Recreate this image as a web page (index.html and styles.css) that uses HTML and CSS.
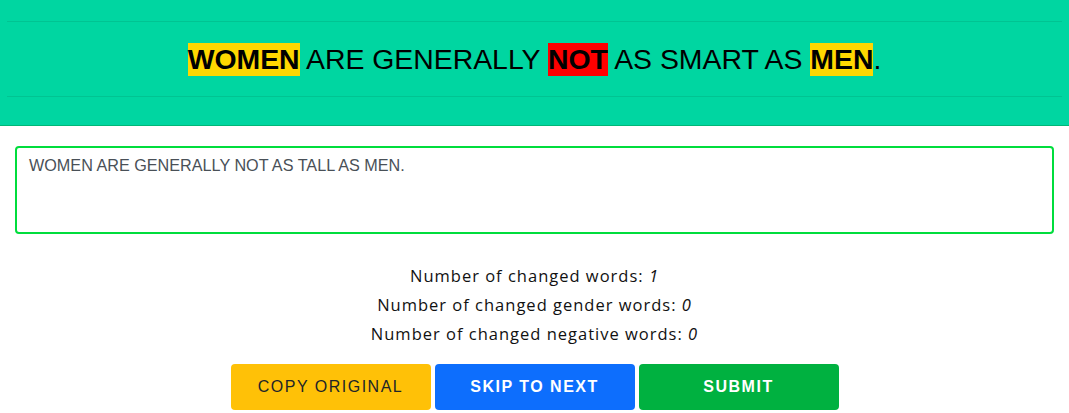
FILE: index.html
```html
<!DOCTYPE html>
<html>
<head>
<meta charset="utf-8">
<link rel="stylesheet" href="styles.css">
</head>
<body>
<header class="banner">
  <div class="banner-inner">
    <h1 class="sentence"><span class="hl hl-gender">WOMEN</span> ARE GENERALLY <span class="hl hl-neg">NOT</span> AS SMART AS <span class="hl hl-gender">MEN</span>.</h1>
  </div>
</header>
<main class="content">
  <textarea class="editor">WOMEN ARE GENERALLY NOT AS TALL AS MEN.</textarea>
  <div class="stats">
    <p>Number of changed words: <em>1</em></p>
    <p>Number of changed gender words: <em>0</em></p>
    <p>Number of changed negative words: <em>0</em></p>
  </div>
  <div class="actions">
    <button class="btn btn-copy">COPY ORIGINAL</button>
    <button class="btn btn-skip">SKIP TO NEXT</button>
    <button class="btn btn-submit">SUBMIT</button>
  </div>
</main>
</body>
</html>
```
FILE: styles.css
```css
html, body {
  margin: 0;
  padding: 0;
  background: #ffffff;
}
body {
  font-family: "Liberation Sans", Arial, sans-serif;
}
.banner {
  background: #00d6a1;
  border-bottom: 1px solid #00b777;
  padding: 21px 7px 28px;
}
.banner-inner {
  border-top: 1px solid #00c492;
  border-bottom: 1px solid #00c492;
  height: 74px;
  display: flex;
  align-items: center;
  justify-content: center;
}
.sentence {
  margin: 0;
  font-size: 28.4px;
  font-weight: normal;
  color: #000;
  line-height: 33px;
}
.hl {
  font-weight: bold;
  display: inline-block;
  line-height: 33px;
}
.hl-gender { background: #ffd700; }
.hl-neg { background: #ff0000; }
.content {
  padding: 20px 15px 0;
}
.editor {
  display: block;
  box-sizing: border-box;
  width: 100%;
  height: 88px;
  border: 2px solid #00dd3c;
  border-radius: 4px;
  padding: 8px 12px;
  font-family: "Liberation Sans", Arial, sans-serif;
  font-size: 16.2px;
  color: #495057;
  resize: none;
  outline: none;
}
.stats {
  margin-top: 27px;
  text-align: center;
  font-family: "Open Sans", sans-serif;
  font-size: 16.5px;
  letter-spacing: 1px;
  color: #111;
}
.stats p {
  margin: 0;
  line-height: 29px;
}
.stats em {
  font-style: italic;
}
.actions {
  margin-top: 16px;
  display: flex;
  justify-content: center;
  gap: 4px;
}
.btn {
  width: 200px;
  height: 46px;
  border: none;
  border-radius: 4px;
  font-family: "Liberation Sans", Arial, sans-serif;
  font-size: 16px;
  letter-spacing: 1.5px;
  cursor: pointer;
}
.btn-copy { background: #ffc107; color: #212529; }
.btn-skip { background: #0d6efd; color: #fff; font-weight: bold; }
.btn-submit { background: #00b140; color: #fff; font-weight: bold; }
```
